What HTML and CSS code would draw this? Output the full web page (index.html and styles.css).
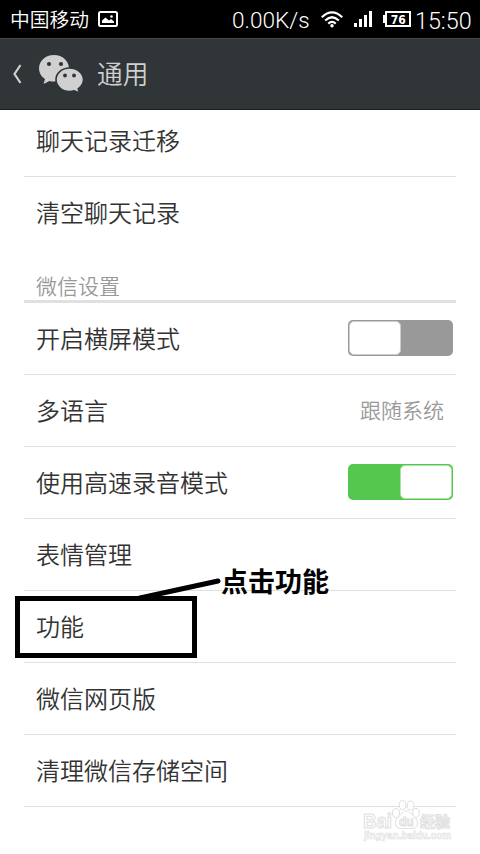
FILE: index.html
```html
<!DOCTYPE html>
<html lang="zh-CN">
<head>
  <meta charset="UTF-8">
  <meta name="viewport" content="width=device-width, initial-scale=1.0">
  <title>通用</title>
  <link rel="stylesheet" href="styles.css">
</head>
<body>
  <div class="screen">
    <div class="status-bar">
      <span class="carrier">中国移动</span>
      <svg class="icon-picture" width="20" height="16" viewBox="0 0 20 16">
        <rect x="1" y="1" width="18" height="14" rx="1.5" fill="none" stroke="#fff" stroke-width="2"/>
        <path d="M4 12V9.500L7.500 6.500L11 9.500L13 8L16 10.500V12Z" fill="#fff"/>
        <circle cx="13.500" cy="5.500" r="1.300" fill="#fff"/>
      </svg>
      <span class="speed">0.00K/s</span>
      <svg class="icon-wifi" width="22" height="17" viewBox="0 0 22 17">
        <g fill="none" stroke="#fff" stroke-width="2.200">
          <path d="M0.800 6.200Q11 -3.500 21.200 6.200"/>
          <path d="M4.200 9.500Q11 3 17.800 9.500"/>
          <path d="M7.300 12.600Q11 9 14.700 12.600"/>
        </g>
        <circle cx="11" cy="14.800" r="1.700" fill="#fff"/>
      </svg>
      <svg class="icon-signal" width="18" height="16" viewBox="0 0 18 16">
        <path d="M0 12h3v4H0zM5 8h3v8H5zM10 4h3v12h-3zM15 0h3v16h-3z" fill="#fff"/>
      </svg>
      <svg class="icon-battery" width="28" height="16" viewBox="0 0 28 16">
        <rect x="3" y="1" width="24" height="14" fill="none" stroke="#fff" stroke-width="2"/>
        <path d="M0 4h2v8H0z" fill="#fff"/>
        <text class="battery-text" x="15.200" y="12.500" text-anchor="middle" textLength="15" lengthAdjust="spacingAndGlyphs">76</text>
      </svg>
      <span class="clock">15:50</span>
    </div>

    <div class="title-bar">
      <svg class="icon-back" width="10" height="20" viewBox="0 0 10 20">
        <path d="M8.500 1L2.500 10L8.500 19" fill="none" stroke="#d0d0d0" stroke-width="2.200"/>
      </svg>
      <svg class="icon-wechat" width="46" height="40" viewBox="0 0 46 40">
        <path d="M16 1C7.200 1 1 7.200 1 14.500c0 4.300 2.200 8 6 10.500L5.500 30l6-3c1.500.4 3 .6 4.500.6C24.500 27.600 31 22 31 14.500S24.500 1 16 1Z" fill="#d0d0d0"/>
        <path d="M31.500 14C24 14 18 19 18 25.600S24 37.500 31.500 37.500c1.600 0 3.200-.2 4.600-.7l5.400 2.200-1.300-4.200c3.100-2.100 5.300-5.200 5.300-9C45.500 19 39 14 31.500 14Z" fill="#d0d0d0" stroke="#303537" stroke-width="1.600"/>
        <g fill="#303537">
          <circle cx="11" cy="10" r="2.100"/>
          <circle cx="23" cy="10" r="2.100"/>
          <circle cx="27" cy="21.500" r="1.900"/>
          <circle cx="36" cy="21.500" r="1.900"/>
        </g>
      </svg>
      <span class="title">通用</span>
    </div>

    <div class="list">
      <div class="row"><span class="label">聊天记录迁移</span></div>
      <div class="row no-line"><span class="label">清空聊天记录</span></div>
      <div class="section">微信设置</div>
      <div class="row"><span class="label">开启横屏模式</span><span class="switch"></span></div>
      <div class="row"><span class="label">多语言</span><span class="value">跟随系统</span></div>
      <div class="row"><span class="label">使用高速录音模式</span><span class="switch on"></span></div>
      <div class="row"><span class="label">表情管理</span></div>
      <div class="row"><span class="label">功能</span></div>
      <div class="row"><span class="label">微信网页版</span></div>
      <div class="row"><span class="label">清理微信存储空间</span></div>
    </div>

    <!-- 标注 -->
    <div class="mark-box"></div>
    <svg class="mark-line" width="84" height="24" viewBox="0 0 84 24">
      <path d="M2 22L80 5" stroke="#000" stroke-width="5" stroke-linecap="round"/>
    </svg>
    <div class="mark-text">点击功能</div>

    <svg class="watermark" width="96" height="46" viewBox="0 0 96 46">
      <g fill="#fff" stroke="#e0e0e0" stroke-width="1">
        <ellipse cx="36" cy="16" rx="3.500" ry="4.500"/>
        <ellipse cx="42.500" cy="8" rx="3.300" ry="4.500"/>
        <ellipse cx="50.500" cy="8.500" rx="3.300" ry="4.500"/>
        <ellipse cx="56" cy="16" rx="3.300" ry="4.500"/>
        <path d="M46 14c-4 0-5 4-8 6.500-3.500 3-4 11 3 11h11c7 0 6.500-8 3-11S50 14 46 14Z"/>
        <text class="wm-logo" x="3" y="31" textLength="29" lengthAdjust="spacingAndGlyphs">Bai</text>
        <text class="wm-du" x="39" y="29">du</text>
        <text class="wm-cn" x="60" y="30">经验</text>
        <text class="wm-url" x="4" y="42" textLength="87" lengthAdjust="spacingAndGlyphs">jingyan.baidu.com</text>
      </g>
    </svg>
  </div>
</body>
</html>
```
FILE: styles.css
```css
body {
  margin: 0;
  background: #fff;
  font-family: "Noto Sans CJK SC", sans-serif;
}
.screen {
  position: relative;
  width: 480px;
  height: 854px;
  overflow: hidden;
}
.status-bar {
  display: flex;
  align-items: center;
  box-sizing: border-box;
  height: 38px;
  padding-left: 10px;
  background: #000;
  color: #fff;
}
.carrier {
  width: 88px;
  font-size: 19.800px;
  font-weight: 350;
  line-height: 38px;
}
.speed,
.clock {
  font-family: Roboto, sans-serif;
  font-weight: 300;
  line-height: 38px;
  padding-top: 3px;
}
.speed {
  width: 89px;
  margin-left: 114px;
  font-size: 22.600px;
}
.clock {
  font-size: 23.300px;
  margin-left: 4px;
}
.icon-signal {
  margin-left: 11px;
}
.icon-battery {
  margin-left: 11px;
}
.battery-text {
  font-family: "DejaVu Sans", sans-serif;
  font-size: 12px;
  font-weight: bold;
  fill: #fff;
}
.title-bar {
  display: flex;
  align-items: center;
  box-sizing: border-box;
  height: 72px;
  padding-left: 12px;
  background: #303537;
  border-top: 1px solid #4b4945;
  border-bottom: 1px solid #1c1f20;
}
.icon-wechat {
  margin-left: 16px;
}
.title {
  margin-left: 13px;
  padding-bottom: 4px;
  font-size: 25.700px;
  font-weight: 350;
  color: #d0d0d0;
}
/* 列表已向上滚动 5px */
.list {
  height: 744px;
  overflow: hidden;
  padding: 0 24px;
}
.row {
  display: flex;
  align-items: center;
  justify-content: space-between;
  box-sizing: border-box;
  height: 72px;
  padding: 0 3px 1px 12px;
  border-bottom: 1px solid #e0e0e0;
  font-size: 24px;
  font-weight: 350;
  color: #333;
}
.row:first-child {
  margin-top: -5px;
}
.label {
  padding-bottom: 2px;
}
.no-line {
  border-bottom-color: transparent;
}
.section {
  box-sizing: border-box;
  height: 54px;
  padding: 21px 0 0 12px;
  border-bottom: 3px solid #e0e0e0;
  font-size: 21px;
  font-weight: 350;
  line-height: 31px;
  color: #999;
}
.value {
  margin-right: 9px;
  padding-bottom: 2px;
  font-size: 21px;
  color: #999;
}
.switch {
  display: flex;
  box-sizing: border-box;
  width: 105px;
  height: 36px;
  padding: 1px;
  border-radius: 5px;
  background: #999;
}
.switch::before {
  content: "";
  box-sizing: border-box;
  width: 52px;
  border: 1px solid #ccc;
  border-radius: 5px;
  background: #fff;
}
.on {
  justify-content: flex-end;
  background: #54c84e;
}
.on::before {
  border-color: #a9e3a6;
}
.mark-box {
  position: absolute;
  left: 15px;
  top: 596px;
  box-sizing: border-box;
  width: 182px;
  height: 62px;
  border: 5px solid #000;
}
.mark-line {
  position: absolute;
  left: 138px;
  top: 576px;
}
.mark-text {
  position: absolute;
  left: 221px;
  top: 561px;
  font-size: 27px;
  font-weight: bold;
  line-height: 40px;
  color: #000;
}
.watermark {
  position: absolute;
  left: 360px;
  top: 797px;
}
.wm-logo,
.wm-du,
.wm-url {
  font-family: "Liberation Sans", sans-serif;
  font-weight: bold;
}
.wm-logo {
  font-size: 20px;
}
.wm-du {
  font-size: 12px;
}
.wm-cn {
  font-size: 15px;
  font-weight: bold;
}
.wm-url {
  font-size: 10px;
  stroke-width: 0.600px;
}
```
